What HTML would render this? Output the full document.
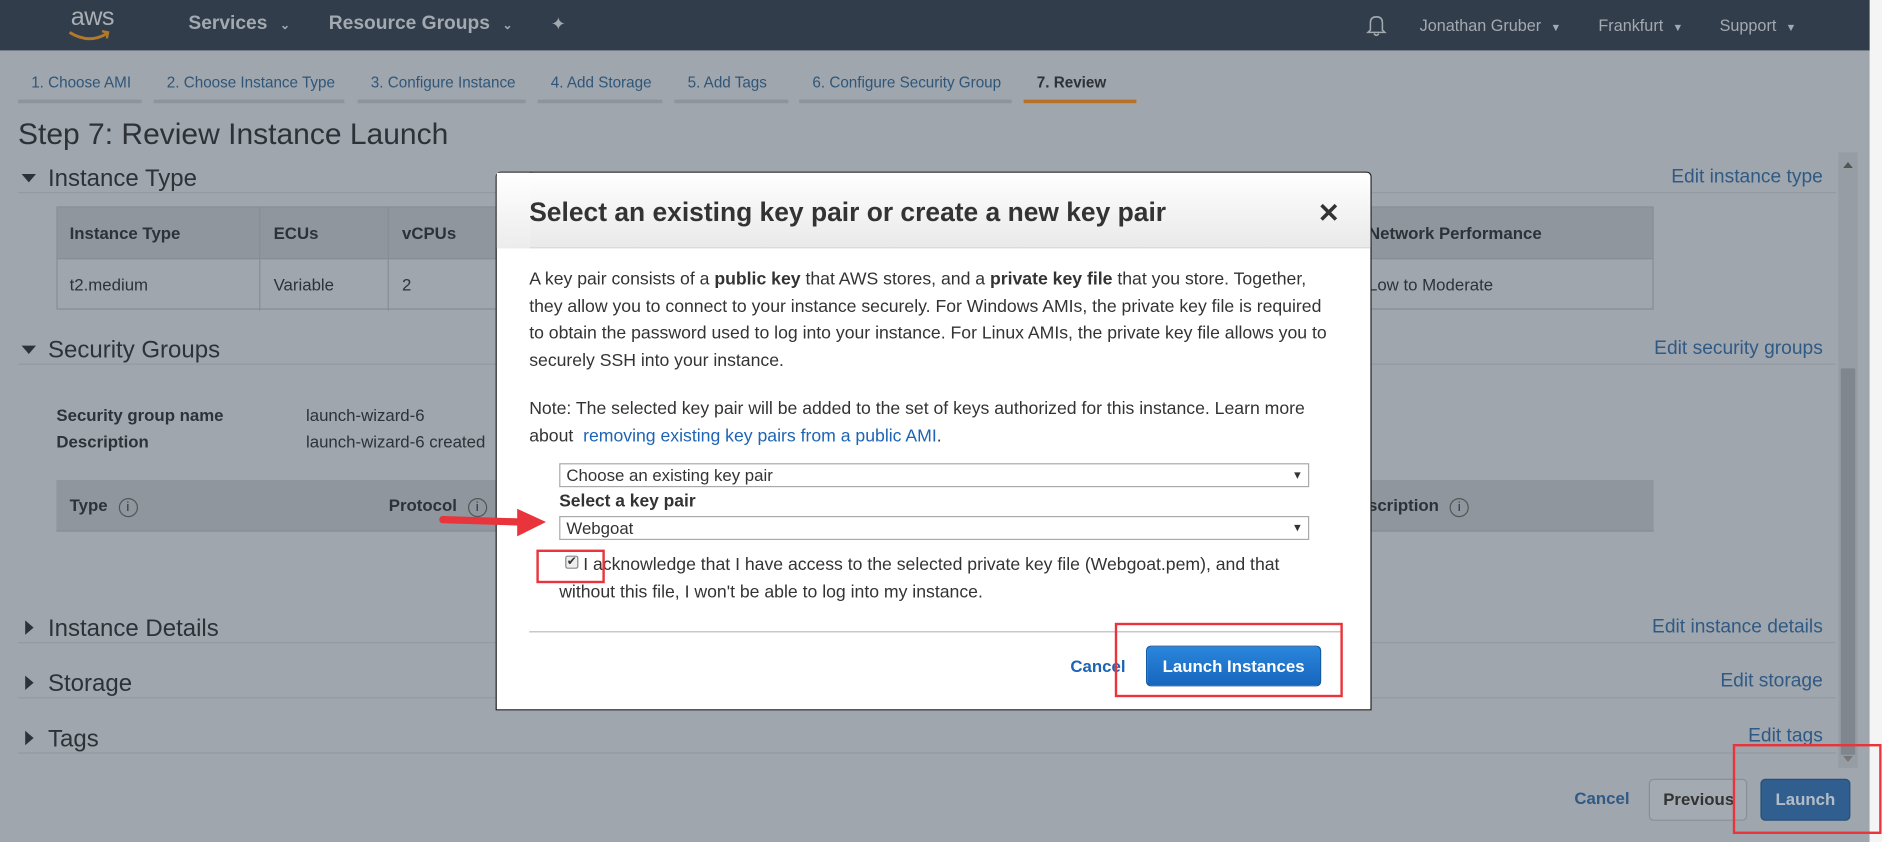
<!DOCTYPE html>
<html><head><meta charset="utf-8"><style>
*{box-sizing:border-box;margin:0;padding:0}
html,body{width:1882px;height:842px;overflow:hidden;background:#f4f4f4;font-family:"Liberation Sans",Arial,sans-serif}
#w{position:absolute;left:0;top:0;width:1568px;height:702px;transform:scale(1.2);transform-origin:0 0;overflow:hidden}
.pg{position:absolute;left:0;top:0;width:1558px;height:702px;background:#a0a6ad}
.nav{position:absolute;left:0;top:0;width:1558px;height:42px;background:#313d4b;color:#a3a9b0}
.a{position:absolute;white-space:nowrap}
.tab{position:absolute;top:62px;font-size:12.7px;color:#2f5679}
.ul{position:absolute;top:83px;height:3px;background:#8d949b}
.h2{position:absolute;font-size:20px;color:#2c3238}
.tri{position:absolute;width:0;height:0}
.hl{position:absolute;left:15px;width:1515px;height:1px;background:#939aa1}
.edit{position:absolute;font-size:16px;color:#2f5a85;right:39px}
.t{position:absolute;font-size:14px;color:#2c3238}
.b{font-weight:bold}
.modal{position:absolute;left:413px;top:143px;width:730px;height:449px;background:#fff;border:1px solid #222;border-radius:4px 4px 0 0}
.mt{font-size:14.7px;color:#333;line-height:22.5px;white-space:normal}
.sel{position:absolute;left:52px;width:625px;height:20px;border:1px solid #aaa;font-size:14px;color:#333;padding:0 5px;line-height:18px}
.sel:after{content:"▾";position:absolute;right:6px;top:0;font-size:11px}
.red{position:absolute;border:2px solid #e8343a}
</style></head><body><div id="w">
<div class="pg">
<div class="nav">
 <div class="a" style="left:59px;top:3px;font-size:21px;color:#a9afb5;letter-spacing:-0.5px">aws</div>
 <svg class="a" style="left:56px;top:25px" width="36" height="10"><path d="M2 2 Q18 12 33 3" stroke="#b07a2a" stroke-width="2.5" fill="none"/><path d="M29 1 L34 2 L33 7" stroke="#b07a2a" stroke-width="2" fill="none"/></svg>
 <div class="a b" style="left:157px;top:11px;font-size:16px">Services <span style="font-size:10px;margin-left:6px">⌄</span></div>
 <div class="a b" style="left:274px;top:11px;font-size:16px">Resource Groups <span style="font-size:10px;margin-left:6px">⌄</span></div>
 <div class="a" style="left:459px;top:11px;font-size:15px">✦</div>
 <svg class="a" style="left:1137px;top:11px" width="20" height="20"><path d="M5 14 L5 8 Q5 3 10 3 Q15 3 15 8 L15 14 L17 16 L3 16 Z M8 17 Q10 20 12 17" stroke="#a3a9b0" stroke-width="1.3" fill="none"/></svg>
 <div class="a" style="left:1183px;top:14px;font-size:13.5px">Jonathan Gruber <span style="font-size:9px;margin-left:4px">▼</span></div>
 <div class="a" style="left:1332px;top:14px;font-size:13.5px">Frankfurt <span style="font-size:9px;margin-left:4px">▼</span></div>
 <div class="a" style="left:1433px;top:14px;font-size:13.5px">Support <span style="font-size:9px;margin-left:4px">▼</span></div>
</div>
<div class="tab" style="left:26px">1. Choose AMI</div><div class="ul" style="left:15px;width:103px"></div>
<div class="tab" style="left:139px">2. Choose Instance Type</div><div class="ul" style="left:128px;width:159px"></div>
<div class="tab" style="left:309px">3. Configure Instance</div><div class="ul" style="left:298px;width:140px"></div>
<div class="tab" style="left:459px">4. Add Storage</div><div class="ul" style="left:448px;width:104px"></div>
<div class="tab" style="left:573px">5. Add Tags</div><div class="ul" style="left:562px;width:95px"></div>
<div class="tab" style="left:677px">6. Configure Security Group</div><div class="ul" style="left:666px;width:177px"></div>
<div class="tab b" style="left:864px;color:#2c3238">7. Review</div><div class="ul" style="left:853px;width:94px;background:#b87228"></div>
<div class="a" style="left:15px;top:98px;font-size:25px;color:#2c3238">Step 7: Review Instance Launch</div>

<div class="tri" style="left:18px;top:145px;border:6px solid transparent;border-top:7px solid #2c3238"></div>
<div class="h2" style="left:40px;top:138px">Instance Type</div><div class="hl" style="top:160px"></div>
<div class="edit" style="top:139px">Edit instance type</div>
<div class="a" style="left:47px;top:172px;width:1331px;height:86px;border:1px solid #868d94">
 <div style="height:43px;background:#8f969e;border-bottom:1px solid #868d94"></div>
 <div class="a" style="left:168px;top:0;width:1px;height:86px;background:#868d94"></div>
 <div class="a" style="left:275px;top:0;width:1px;height:86px;background:#868d94"></div>
</div>
<div class="t b" style="left:58px;top:186px">Instance Type</div><div class="t b" style="left:228px;top:186px">ECUs</div><div class="t b" style="left:335px;top:186px">vCPUs</div><div class="t b" style="left:1140px;top:186px">Network Performance</div>
<div class="t" style="left:58px;top:229px">t2.medium</div><div class="t" style="left:228px;top:229px">Variable</div><div class="t" style="left:335px;top:229px">2</div><div class="t" style="left:1140px;top:229px">Low to Moderate</div>

<div class="tri" style="left:18px;top:288px;border:6px solid transparent;border-top:7px solid #2c3238"></div>
<div class="h2" style="left:40px;top:281px">Security Groups</div><div class="hl" style="top:303px"></div>
<div class="edit" style="top:282px">Edit security groups</div>
<div class="t b" style="left:47px;top:338px">Security group name</div><div class="t" style="left:255px;top:338px">launch-wizard-6</div>
<div class="t b" style="left:47px;top:360px">Description</div><div class="t" style="left:255px;top:360px">launch-wizard-6 created</div>
<div class="a" style="left:47px;top:400px;width:1331px;height:43px;background:#8f969e;border-bottom:1px solid #868d94"></div>
<div class="t b" style="left:58px;top:413px">Type <span style="font-weight:normal;border:1px solid #555;border-radius:50%;display:inline-block;width:16px;height:16px;font-size:11px;text-align:center;line-height:14px;margin-left:5px">i</span></div>
<div class="t b" style="left:324px;top:413px">Protocol <span style="font-weight:normal;border:1px solid #555;border-radius:50%;display:inline-block;width:16px;height:16px;font-size:11px;text-align:center;line-height:14px;margin-left:5px">i</span></div>
<div class="t b" style="left:1140px;top:413px">scription <span style="font-weight:normal;border:1px solid #555;border-radius:50%;display:inline-block;width:16px;height:16px;font-size:11px;text-align:center;line-height:14px;margin-left:5px">i</span></div>

<div class="tri" style="left:21px;top:517px;border:6px solid transparent;border-left:7px solid #2c3238"></div>
<div class="h2" style="left:40px;top:513px">Instance Details</div><div class="hl" style="top:535px"></div>
<div class="edit" style="top:514px">Edit instance details</div>
<div class="tri" style="left:21px;top:563px;border:6px solid transparent;border-left:7px solid #2c3238"></div>
<div class="h2" style="left:40px;top:559px">Storage</div><div class="hl" style="top:581px"></div>
<div class="edit" style="top:559px">Edit storage</div>
<div class="tri" style="left:21px;top:609px;border:6px solid transparent;border-left:7px solid #2c3238"></div>
<div class="h2" style="left:40px;top:605px">Tags</div><div class="hl" style="top:627px"></div>
<div class="edit" style="top:605px">Edit tags</div>

<div class="a" style="left:1532px;top:127px;width:16px;height:513px;background:#979da4"></div>
<div class="a" style="left:1534px;top:307px;width:12px;height:322px;background:#80868d"></div>
<div class="a" style="left:1536px;top:131px;border:4px solid transparent;border-bottom:5px solid #555"></div>
<div class="a" style="left:1536px;top:630px;border:4px solid transparent;border-top:5px solid #777"></div>

<div class="a b" style="left:1312px;top:657px;font-size:14px;color:#2f5a85">Cancel</div>
<div class="a b" style="left:1374px;top:649px;width:82px;height:35px;border:1px solid #888f96;border-radius:4px;background:#a4aab1;font-size:14px;color:#333;padding:8px 0 0 11px">Previous</div>
<div class="a b" style="left:1467px;top:649px;width:75px;height:35px;border-radius:4px;background:#305e8f;border:1px solid #284f78;font-size:14px;color:#b4bdc7;text-align:center;padding-top:8px">Launch</div>
<div class="red" style="left:1444px;top:620px;width:124px;height:75px"></div>

<div class="modal">
 <div style="height:63px;background:linear-gradient(#fff,#e9e9e9);border-radius:4px 4px 0 0;border-bottom:1px solid #ccc;margin:0 0 0 27px"></div>
 <div class="a" style="left:0;top:0;width:27px;height:63px;background:linear-gradient(#fff,#ececec)"></div>
 <div class="a" style="left:27px;top:20px;font-size:22px;color:#333;font-weight:bold">Select an existing key pair or create a new key pair</div>
 <div class="a" style="left:684px;top:21px;font-size:22px;color:#333;font-weight:bold">✕</div>
 <div class="a mt" style="left:27px;top:78px;width:672px">A key pair consists of a <b>public key</b> that AWS stores, and a <b>private key file</b> that you store. Together, they allow you to connect to your instance securely. For Windows AMIs, the private key file is required to obtain the password used to log into your instance. For Linux AMIs, the private key file allows you to securely SSH into your instance.</div>
 <div class="a mt" style="left:27px;top:186px;width:680px">Note: The selected key pair will be added to the set of keys authorized for this instance. Learn more about &nbsp;<span style="color:#1d64b4">removing existing key pairs from a public AMI</span>.</div>
 <div class="sel" style="top:242px">Choose an existing key pair</div>
 <div class="a b" style="left:52px;top:266px;font-size:14.5px;color:#333">Select a key pair</div>
 <div class="sel" style="top:286px">Webgoat</div>
 <div class="a" style="left:57px;top:319px;width:11px;height:11px;border:1px solid #888;border-radius:2px;background:#eee;font-size:10px;line-height:9px;color:#333;text-align:center">✔</div>
 <div class="a mt" style="left:52px;top:316px;width:620px;text-indent:20px">I acknowledge that I have access to the selected private key file (Webgoat.pem), and that without this file, I won't be able to log into my instance.</div>
 <div class="a" style="left:27px;top:382px;width:676px;height:1px;background:#bbb"></div>
 <div class="a b" style="left:478px;top:403px;font-size:14px;color:#1d64b4">Cancel</div>
 <div class="a b" style="left:541px;top:394px;width:146px;height:34px;border-radius:4px;background:linear-gradient(#2a86dc,#1766bd);border:1px solid #155aa5;color:#fff;font-size:14px;text-align:center;padding-top:8px">Launch Instances</div>
</div>
<div class="red" style="left:929px;top:519px;width:190px;height:62px"></div>
<div class="red" style="left:447px;top:458px;width:57px;height:28px"></div>
<svg class="a" style="left:365px;top:420px" width="95" height="30"><path d="M4 13 L68 15" stroke="#e8343a" stroke-width="6" stroke-linecap="round"/><path d="M66 4 L90 15 L66 27 Z" fill="#e8343a"/></svg>
</div>
</div></body></html>
